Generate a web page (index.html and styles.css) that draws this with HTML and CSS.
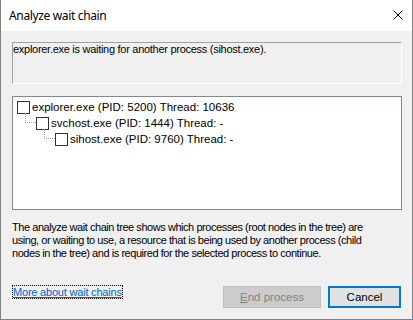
FILE: index.html
```html
<!DOCTYPE html>
<html>
<head>
    <title>Analyze wait chain</title>
    <link rel="stylesheet" href="styles.css">
</head>
<body>
    <div class="window">
        <div class="title-bar">
            <span class="title">Analyze wait chain</span>
            <svg class="close-icon" width="10" height="10" viewBox="0 0 10 10">
                <path d="M0.5 0.5 L9.5 9.5 M9.5 0.5 L0.5 9.5" stroke="#000" stroke-width="1" fill="none"/>
            </svg>
        </div>

        <div class="dialog-body">
            <div class="status-box">explorer.exe is waiting for another process (sihost.exe).</div>

            <div class="tree">
                <div class="tree-row level-0">
                    <span class="check"></span>
                    <span class="label">explorer.exe (PID: 5200) Thread: 10636</span>
                </div>
                <div class="tree-row level-1">
                    <span class="connector"></span>
                    <span class="check"></span>
                    <span class="label">svchost.exe (PID: 1444) Thread: -</span>
                </div>
                <div class="tree-row level-2">
                    <span class="connector"></span>
                    <span class="check"></span>
                    <span class="label">sihost.exe (PID: 9760) Thread: -</span>
                </div>
            </div>

            <p class="description">
                The analyze wait chain tree shows which processes (root nodes in the tree) are<br>
                using, or waiting to use, a resource that is being used by another process (child<br>
                nodes in the tree) and is required for the selected process to continue.
            </p>

            <div class="footer">
                <a class="help-link" href="#">More about wait chains</a>
                <div class="buttons">
                    <button class="btn btn-disabled" disabled><u>E</u>nd process</button>
                    <button class="btn btn-default">Cancel</button>
                </div>
            </div>
        </div>
    </div>
</body>
</html>
```

FILE: styles.css
```css
body {
    margin: 0;
    padding: 0;
    background-color: #f0f0f0;
    font-family: "Liberation Sans", Arial, sans-serif;
    font-size: 11px;
    color: #000;
}

.window {
    width: 413px;
    height: 320px;
    box-sizing: border-box;
    border: 1px solid #808080;
    border-top: none;
    background-color: #f0f0f0;
    display: flex;
    flex-direction: column;
}

.title-bar {
    height: 31px;
    background-color: #fff;
    display: flex;
    align-items: center;
    padding-left: 8px;
    padding-right: 9px;
}

.title {
    flex: 1;
    font-family: "Segoe UI", "Noto Sans", sans-serif;
    font-size: 12px;
    letter-spacing: -0.35px;
    color: #000;
}

.close-icon {
    display: block;
    margin-top: -1px;
}

.dialog-body {
    flex: 1;
    display: flex;
    flex-direction: column;
    padding: 11px 10px 11px 11px;
}

.status-box {
    height: 40px;
    border: 1px solid;
    border-color: #a0a0a0 #fff #fff #a0a0a0;
    line-height: 13px;
    letter-spacing: -0.28px;
    white-space: nowrap;
}

.tree {
    margin-top: 12px;
    height: 110px;
    border: 1px solid #828790;
    background-color: #fff;
    padding-top: 2px;
}

.tree-row {
    display: flex;
    height: 16px;
    line-height: 16px;
    font-size: 11.5px;
    white-space: nowrap;
}

.level-0 {
    padding-left: 4px;
}

.level-1 {
    padding-left: 12px;
}

.level-2 {
    padding-left: 31px;
}

.connector {
    width: 11px;
    height: 10px;
    margin-top: -2px;
    border-left: 1px dotted #a0a0a0;
    border-bottom: 1px dotted #a0a0a0;
    box-sizing: border-box;
}

.check {
    width: 13px;
    height: 13px;
    margin-top: 2px;
    box-sizing: border-box;
    border: 1px solid #333;
    background-color: #fff;
}

.label {
    margin-left: 2px;
}

.description {
    margin: 11px 0 0 0;
    line-height: 13px;
    letter-spacing: -0.45px;
    white-space: nowrap;
}

.footer {
    margin-top: auto;
    display: flex;
    align-items: flex-start;
    justify-content: space-between;
}

.help-link {
    margin-top: -1px;
    padding: 0 1px;
    outline: 1px dotted #000;
    outline-offset: -1px;
    color: #0066cc;
    line-height: 14px;
    letter-spacing: -0.2px;
}

.buttons {
    display: flex;
    gap: 7px;
    margin-right: 1px;
}

.btn {
    height: 22px;
    box-sizing: border-box;
    font-family: "Liberation Sans", Arial, sans-serif;
    font-size: 11.5px;
    padding: 0;
}

.btn-disabled {
    width: 98px;
    background-color: #cccccc;
    border: 1px solid #bfbfbf;
    color: #838383;
}

.btn-default {
    width: 73px;
    background-color: #e1e1e1;
    border: 2px solid #0078d7;
    color: #000;
}
```
